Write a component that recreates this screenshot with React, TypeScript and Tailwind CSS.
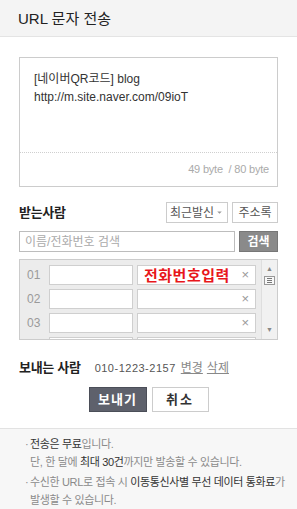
import { ChevronDown } from "lucide-react";

const font = "font-['Liberation_Sans','Noto_Sans_CJK_KR',sans-serif]";

function Row({ no, first, stub }: { no?: string; first?: boolean; stub?: boolean }) {
  return (
    <div className="flex items-center h-[20px] shrink-0">
      <div className="w-[29px] pl-[7px] text-[12px] text-[#9a9a9a]">{no}</div>
      <div className="w-[84px] h-[20px] bg-white border border-[#cfcfcf]" />
      <div className="relative ml-[4px] w-[119px] h-[20px] bg-white border border-[#cfcfcf] flex items-center">
        {first && (
          <span className="pl-[6px] text-[15px] font-bold text-[#e8161b] tracking-[0.5px] leading-none">
            전화번호입력
          </span>
        )}
        {!stub && <span className="absolute right-[6px] top-[1px] text-[13px] text-[#999] leading-[16px]">×</span>}
      </div>
    </div>
  );
}

export default function App() {
  return (
    <div className={`w-[297px] h-[509px] bg-white flex flex-col ${font} text-[#333]`}>
      <div className="h-[37px] shrink-0 bg-[#f4f4f4] border-b border-[#e4e4e4] px-[18px] flex items-center">
        <h1 className="text-[15px] text-[#222] leading-none">URL 문자 전송</h1>
      </div>

      <div className="px-[19px] pt-[20px]">
        <div className="h-[130px] border border-[#cccccc] flex flex-col">
          <div className="h-[95px] px-[14px] pt-[12px] text-[12px] leading-[18px] text-[#333] border-b border-dotted border-[#cfcfcf]">
            <p>[네이버QR코드] blog</p>
            <p>http://m.site.naver.com/09ioT</p>
          </div>
          <div className="flex-1 flex items-center justify-end pr-[8px] text-[11px] text-[#aaa] tracking-[-0.2px]">
            49 byte &nbsp;/ 80 byte
          </div>
        </div>

        <div className="mt-[15px] h-[21px] flex items-center">
          <span className="text-[13px] font-bold text-[#222] tracking-[-0.3px]">받는사람</span>
          <div className="ml-auto flex gap-[4px]">
            <button className="h-[21px] w-[62px] bg-white border border-[#cccccc] text-[12px] text-[#555] flex items-center justify-center">
              최근발신
              <ChevronDown size={9} strokeWidth={0} fill="#999" className="ml-[1px]" />
            </button>
            <button className="h-[21px] w-[46px] bg-white border border-[#cccccc] text-[12px] text-[#555]">주소록</button>
          </div>
        </div>

        <div className="mt-[8px] h-[21px] flex gap-[4px]">
          <div className="flex-1 border border-[#bdbdbd] flex items-center pl-[5px] text-[12px] text-[#aaa]">
            이름/전화번호 검색
          </div>
          <button className="w-[39px] bg-[#8a8a8a] border border-[#777] text-white text-[12px] font-bold">검색</button>
        </div>

        <div className="mt-[7px] h-[81px] bg-[#ececec] border border-[#cccccc] flex overflow-hidden">
          <div className="flex-1 flex flex-col gap-[4px] pt-[5px]">
            <Row no="01" first />
            <Row no="02" />
            <Row no="03" />
            <Row stub />
          </div>
          <div className="w-[16px] bg-[#f1f1f1] border-l border-[#dedede] flex flex-col items-center justify-between py-[5px] text-[#888]">
            <div className="flex flex-col items-center">
              <span className="text-[7px] leading-[8px]">▲</span>
              <span className="mt-[3px] w-[11px] h-[9px] border border-[#999] bg-[#f8f8f8] flex flex-col justify-center gap-[1px] px-[2px]">
                <span className="h-px bg-[#777]" />
                <span className="h-px bg-[#777]" />
                <span className="h-px bg-[#777]" />
              </span>
            </div>
            <span className="text-[7px] leading-[8px]">▼</span>
          </div>
        </div>

        <div className="mt-[19px] h-[18px] flex items-center">
          <span className="text-[13px] font-bold text-[#222] tracking-[-0.3px]">보내는 사람</span>
          <span className="ml-[14px] text-[11px] text-[#555] tracking-[0.5px]">010-1223-2157</span>
          <span className="ml-[5px] text-[12px] text-[#888] underline">변경</span>
          <span className="ml-[4px] text-[12px] text-[#888] underline">삭제</span>
        </div>

        <div className="mt-[10px] flex justify-center gap-[5px]">
          <button className="w-[58px] h-[25px] bg-[#5e616c] border border-[#4b4e58] text-white text-[13px] font-bold tracking-[1px]">
            보내기
          </button>
          <button className="w-[57px] h-[25px] bg-white border border-[#cccccc] text-[#333] text-[13px] font-bold tracking-[2px]">
            취소
          </button>
        </div>
      </div>

      <div className="mt-[16px] flex-1 bg-[#f7f7f7] border-t border-[#e2e2e2] pl-[25px] pr-[2px] pt-[6px] text-[11px] leading-[18px] text-[#8a8a8a] tracking-[-0.35px]">
        <div className="flex">
          <span className="w-[5px] shrink-0">·</span>
          <p>
            <span className="text-[#333]">전송은 무료</span>입니다.
            <br />
            단, 한 달에 <span className="text-[#333]">최대 30건</span>까지만 발송할 수 있습니다.
          </p>
        </div>
        <div className="flex mt-[2px]">
          <span className="w-[5px] shrink-0">·</span>
          <p>
            수신한 URL로 접속 시 <span className="text-[#333]">이동통신사별 무선 데이터 통화료</span>가
            <br />
            발생할 수 있습니다.
          </p>
        </div>
      </div>
    </div>
  );
}
